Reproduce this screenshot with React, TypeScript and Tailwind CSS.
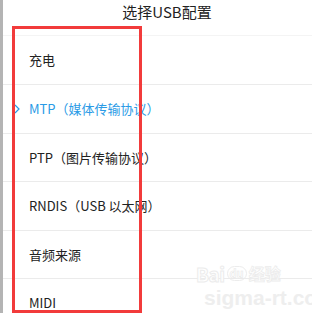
const rows = [
  { label: "充电", h: "h-[49px]" },
  { label: "MTP（媒体传输协议）", h: "h-[49px]", active: true },
  { label: "PTP（图片传输协议）", h: "h-[48px]" },
  { label: "RNDIS（USB 以太网）", h: "h-[49px]" },
  { label: "音频来源", h: "h-[48px]" },
  { label: "MIDI", h: "h-[49px]" },
];

function Chevron() {
  return (
    <svg width="6" height="10" viewBox="0 0 6 10" className="absolute left-[11px] top-1/2 -translate-y-1/2">
      <path d="M1 1l4 4-4 4" fill="none" stroke="#2b9be6" strokeWidth="1.2" />
    </svg>
  );
}

export default function App() {
  return (
    <div
      className="relative flex h-[313px] w-[312px] overflow-hidden bg-white"
      style={{ fontFamily: '"Noto Sans CJK SC", "Noto Sans", sans-serif' }}
    >
      <div className="w-[3px] shrink-0 bg-[#b4b4b4]" />
      <div className="flex flex-1 flex-col">
        <div className="flex h-[36px] shrink-0 items-center justify-center border-b border-[#f4f4f4] pb-[11px] pl-[19px] text-[15px] text-[#222]">
          选择USB配置
        </div>
        {rows.map((r) => (
          <div
            key={r.label}
            className={`relative flex ${r.h} shrink-0 items-center border-b border-[#ebebeb] pl-[26px] text-[13px] ${
              r.active ? "text-[#2b9be6]" : "text-[#222]"
            }`}
          >
            {r.active && <Chevron />}
            {r.label}
          </div>
        ))}
      </div>

      {/* watermark */}
      <div className="pointer-events-none absolute left-[196px] top-[262px] flex h-[22px] items-center gap-[2px] leading-none">
        <span className="text-[19px] font-bold tracking-tight text-white" style={{ WebkitTextStroke: "1px #ececec" }}>
          Bai
        </span>
        <span className="rounded-full border border-[#ececec] px-[2px] text-[11px] font-bold leading-[13px] text-white" style={{ WebkitTextStroke: "0.6px #e8e8e8" }}>
          du
        </span>
        <span className="text-[16px] font-bold text-white" style={{ WebkitTextStroke: "0.8px #ececec" }}>
          经验
        </span>
      </div>
      <div
        className="pointer-events-none absolute left-[204px] top-[287px] whitespace-nowrap text-[21px] font-bold leading-none text-[#eeeeee]"
        style={{ fontFamily: '"Liberation Sans", sans-serif' }}
      >
        sigma-rt.com
      </div>

      {/* red annotation box */}
      <div className="pointer-events-none absolute left-[12px] top-[26px] h-[287px] w-[130px] border-[3px] border-[#f23b3b]" />
    </div>
  );
}
